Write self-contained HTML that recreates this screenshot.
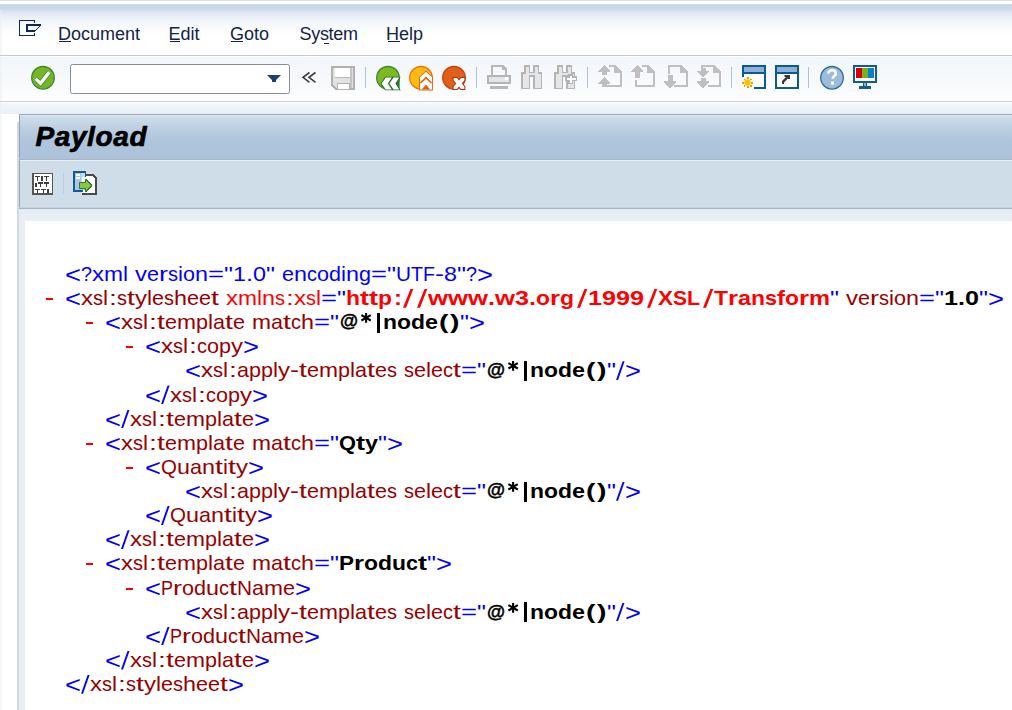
<!DOCTYPE html>
<html><head><meta charset="utf-8">
<style>
html,body{margin:0;padding:0;}
body{width:1012px;height:710px;overflow:hidden;position:relative;background:#fff;font-family:"Liberation Sans",sans-serif;}
.abs{position:absolute;}
#top{left:0;top:0;width:1012px;height:56px;
 background:linear-gradient(to bottom,#d6e1ed 0,#d6e1ed 1px,#fff 1px,#fff 4px,#c9d7e7 4px,#ccd9e8 9px,#e4ebf4 14px,#f3f6fa 22px,#fbfcfe 30px,#ffffff 36px,#ffffff 100%);}
#topline{left:0;top:55px;width:1012px;height:1px;background:#c2ccd8;}
#tb{left:0;top:56px;width:1012px;height:46px;background:linear-gradient(to bottom,#fff 0,#fff 1px,#f3f6fa 1px,#f8fafc 30px,#fdfdfe 45px);}
#tbline{left:0;top:101px;width:1012px;height:1px;background:#c9d1db;}
#below{left:0;top:102px;width:1012px;height:608px;background:linear-gradient(to bottom,#fff 0,#fff 1px,#f4f6fa 1px,#eaeff6 12px,#fff 12px);}
#leftstrip{left:0;top:10px;width:2px;height:700px;background:linear-gradient(to right,#e8ebef,#f4f6f8);opacity:.6}
#ph{left:19px;top:114px;width:993px;height:46px;border-top:1px solid #94a8bc;border-left:1px solid #8fa5bb;box-sizing:border-box;
 background:linear-gradient(to bottom,#dfe8f1 0,#dfe8f1 1px,#cfdeea 1px,#bccfe1 14px,#afc5db 26px,#acc3da 100%);}
#phb{left:19px;top:158px;width:993px;height:2px;background:linear-gradient(to bottom,#b4c4d4 0,#9fb2c5 100%);}
#pt{left:19px;top:160px;width:993px;height:49px;border-left:1px solid #93a8bd;box-sizing:border-box;
 background:linear-gradient(to bottom,#e6eef5 0,#e6eef5 1px,#cfdde8 1px,#cfdde8 100%);}
#ptb{left:19px;top:207px;width:993px;height:2px;background:linear-gradient(to bottom,#c8d5e0 0,#c8d5e0 50%,#a5b5c5 50%);}
#ptb2{left:19px;top:209px;width:993px;height:1px;background:#e2e9f1;}
#shade{left:17px;top:122px;width:2px;height:588px;background:#d2d9e4;}
#cbg{left:19px;top:209px;width:993px;height:501px;background:#e8eef6;}
#content{left:25px;top:221px;width:987px;height:489px;background:#fff;}
#hl{left:20px;top:115px;width:1px;height:93px;background:#e4ecf3;}
.menu{position:absolute;top:24px;font:18px/20px "Liberation Sans",sans-serif;color:#12234c;white-space:pre;}
.menu u{text-decoration:none;border-bottom:1px solid #12234c;}
.ul{position:absolute;height:1px;background:#12234c;top:41px;}
#title{left:35.5px;top:119.5px;font:italic 700 28px/34px "Liberation Sans",sans-serif;color:#000;letter-spacing:0.6px;-webkit-text-stroke:0.7px #000;}
.sep{position:absolute;width:1px;background:#a9c2df;}
.ln{position:absolute;left:0;width:1012px;height:24px;}
.ln b{position:absolute;top:0;font:400 21px/24px "Liberation Sans",sans-serif;white-space:pre;transform-origin:0 0;}
.ln b.nsb,.ln b.tx{font-weight:700;}
.ln b.m{color:#0000ff}.ln b.t{color:#990000}.ln b.ns,.ln b.nsb{color:#ff0000}.ln b.tx{color:#000}
.ln i.sl{position:absolute;top:2.9px;height:18.8px;}
.ln i.bar{position:absolute;top:2.7px;height:20px;width:2.6px;}
.ln i.d{position:absolute;top:12px;width:6.5px;height:2px;background:#ff0000;}
svg{position:absolute;overflow:visible;}
</style></head><body>
<div id="top" class="abs"></div>
<div id="tb" class="abs"></div>
<div id="below" class="abs"></div>
<div id="leftstrip" class="abs"></div>
<div id="topline" class="abs"></div>
<div id="tbline" class="abs"></div>
<div id="shade" class="abs"></div>
<div id="cbg" class="abs"></div>
<div id="content" class="abs"></div>
<div id="ph" class="abs"></div>
<div id="phb" class="abs"></div>
<div id="pt" class="abs"></div>
<div id="ptb" class="abs"></div><div id="ptb2" class="abs"></div>

<!-- menu -->
<svg style="left:0;top:0" width="1012" height="230" viewBox="0 0 1012 230">
<!-- menu icon -->
<g fill="#102662" shape-rendering="crispEdges">
 <rect x="19" y="20" width="16" height="1"/><rect x="19" y="20" width="1" height="16"/><rect x="19" y="35" width="16" height="1"/>
 <rect x="34" y="20" width="1" height="3"/><rect x="34" y="33" width="1" height="3"/>
 <rect x="26" y="24" width="15" height="2"/><rect x="26" y="24" width="2" height="8"/><rect x="26" y="30" width="9" height="2"/>
 <rect x="39" y="26" width="1" height="1"/><rect x="38" y="27" width="1" height="1"/><rect x="37" y="28" width="1" height="1"/><rect x="36" y="29" width="1" height="1"/><rect x="35" y="30" width="1" height="1"/><rect x="40" y="25" width="1" height="1" opacity=".6"/>
</g>
<!-- check icon -->
<circle cx="43" cy="77.8" r="11.3" fill="#76b527" stroke="#3d8a2e" stroke-width="1.3"/>
<path d="M35.8 78.8 L40.5 83.3 L49.3 72.2" fill="none" stroke="#3f8a2c" stroke-width="5" stroke-linejoin="miter" opacity=".75"/>
<path d="M35.8 78.8 L40.5 83.3 L49.3 72.2" fill="none" stroke="#fff" stroke-width="3.2" stroke-linejoin="miter"/>
<!-- input -->
<rect x="70.5" y="64.5" width="219" height="29" rx="2" fill="#fff" stroke="#8d8d8d"/>
<path d="M267 75 H281 L276 80 V82 H272 V80 Z" fill="#1e3b7c"/>
<!-- << -->
<path d="M309.5 72.5 L303 77.3 L309.5 82.3 M315.5 72.5 L309 77.3 L315.5 82.3" fill="none" stroke="#3c3c3c" stroke-width="1.6"/>
<!-- save -->
<g shape-rendering="crispEdges">
<path d="M331 66 H355 V90 H335 L331 86 Z" fill="#b0b0b0"/>
<path d="M333 68 H353 V88 H336 L333 85 Z" fill="#e2e2e2"/>
<rect x="335" y="68" width="15" height="10" fill="#fff"/><rect x="335" y="77" width="15" height="1" fill="#b8b8b8"/>
<rect x="350" y="68" width="2" height="20" fill="#c4c4c4"/>
<rect x="337" y="83" width="13" height="7" fill="#b0b0b0"/><rect x="338" y="84" width="11" height="5" fill="#fff"/>
</g>
<!-- separators -->
<g fill="#a9c3e0" shape-rendering="crispEdges">
<rect x="365" y="67" width="1" height="21"/><rect x="476" y="67" width="1" height="21"/><rect x="587" y="67" width="1" height="21"/>
<rect x="731" y="67" width="1" height="21"/><rect x="808" y="67" width="1" height="21"/>
</g>
<!-- green back -->
<circle cx="388" cy="77.8" r="11.3" fill="#7cba1e" stroke="#3a8630" stroke-width="1.3"/>
<path d="M385.3 76.9 H399.6 V90 H385.3 L380.8 83.5 Z" fill="#2c7a2c"/>
<path d="M385.8 77.6 H391.8 L387.8 83.5 L391.8 89.4 H385.8 L381.6 83.5 Z M393.6 77.6 H399.2 L395.4 83.5 L399.2 89.4 H393.6 L389.4 83.5 Z" fill="#fff" stroke="#236e2a" stroke-width="1.6" stroke-linejoin="miter" paint-order="stroke"/>
<!-- yellow up -->
<circle cx="421" cy="77.8" r="11.3" fill="#fdbb12" stroke="#e9720e" stroke-width="1.3"/>
<path d="M420 89.5 V77.3 L426 71.8 L432 77.3 V89.5 Z" fill="#fff" stroke="#e4620a" stroke-width="1.8" paint-order="stroke"/>
<path d="M420.5 83 L426 77.6 L431.5 83" fill="none" stroke="#e4620a" stroke-width="1.7"/>
<path d="M421.8 89.5 L426 84.6 L430.2 89.5 Z" fill="#e4620a"/>
<!-- red cancel -->
<circle cx="454" cy="77.8" r="11.3" fill="#e0601a" stroke="#c3410e" stroke-width="1.3"/>
<path d="M453.6 78 H457 L459 80.4 L461 78 H464.4 V80.2 L461.8 83.5 L464.4 86.8 V88.9 H461 L459 86.5 L457 88.9 H453.6 V86.8 L456.2 83.5 L453.6 80.2 Z" fill="#fff" stroke="#b52a06" stroke-width="2" stroke-linejoin="miter" paint-order="stroke"/>
<!-- printer -->
<g shape-rendering="crispEdges">
<path d="M491 65 H503 L507 69 V75 H505 V70 L503 67 H493 V75 H491 Z" fill="#b8b8b8"/>
<rect x="502" y="66" width="3" height="4" fill="#b8b8b8"/>
<rect x="487" y="75" width="24" height="9" rx="1" fill="#b4b4b4"/>
<rect x="489" y="77" width="20" height="5" fill="#e4e4e4"/>
<rect x="505" y="77" width="3" height="3" fill="#fff"/>
<rect x="490" y="86" width="18" height="3" fill="#b8b8b8"/>
</g>
<!-- binoculars -->
<g shape-rendering="crispEdges">
<path d="M524 65 H530 V71.5 H533 V65 H539 V71.5 L542 72.5 V89 H533 V76.5 H530 V89 H521 V72.5 L524 71.5 Z" fill="#b4b4b4"/>
<path d="M525.5 66.5 H528.5 V73 H534.5 V66.5 H537.5 V73.5 L540.5 74 V87.5 H534.5 V75 H528.5 V87.5 H522.5 V74 L525.5 73.5 Z" fill="#e6e6e6"/>
</g>
<g shape-rendering="crispEdges">
<path d="M557 65 H563 V71.5 H566 V65 H572 V71.5 L575 72.5 V89 H566 V76.5 H563 V89 H554 V72.5 L557 71.5 Z" fill="#b4b4b4"/>
<path d="M558.5 66.5 H561.5 V73 H567.5 V66.5 H570.5 V73.5 L573.5 74 V87.5 H567.5 V75 H561.5 V87.5 H555.5 V74 L558.5 73.5 Z" fill="#e6e6e6"/>
<path d="M568 74 H573 V76 H577 V81 H573 V84 H568 V81 H565 V76 H568 Z" fill="#b4b4b4"/>
<path d="M569.5 75.5 H571.5 V77.5 H575.5 V79.5 H571.5 V82.5 H569.5 V79.5 H566.5 V77.5 H569.5 Z" fill="#fff"/>
</g>
<!-- doc arrows -->
<g fill="#bfbfbf" shape-rendering="crispEdges">
 <!-- 1 -->
 <path d="M607 65 H615 L622 72 V87 H607 V85 H620 V72.5 H614 V67 H609 V65 Z"/>
 <path d="M614 65 L620 71 H614 Z"/>
 <path d="M604 65 L610 71 V72 H606.5 V74.5 H601.5 V72 H598 V71 Z"/>
 <path d="M604 77 L610 83 V84 H606.5 V86.5 H601.5 V84 H598 V83 Z"/>
 <!-- 2 -->
 <path d="M640 65 H648 L655 72 V87 H635 V80 H637 V85 H653 V72.5 H647 V67 H642 V65 Z"/>
 <path d="M647 65 L653 71 H647 Z"/>
 <path d="M637 65 L643 71 V72 H639.5 V77.7 H634.5 V72 H631 V71 Z"/>
 <!-- 3 -->
 <path d="M668 65 H681 L688 72 V87 H674 V85 H686 V72.5 H680 V67 H670 V73.5 H668 Z"/>
 <path d="M680 65 L686 71 H680 Z"/>
 <path d="M667.5 75 H672.5 V81 H676 V82 L670 88.8 L664 82 V81 H667.5 Z"/>
 <!-- 4 -->
 <path d="M701 65 H714 L721 72 V87 H708 V85 H719 V72.5 H713 V67 H703 V68 H701 Z"/>
 <path d="M713 65 L719 71 H713 Z"/>
 <path d="M700.5 68 H705.5 V71 H709 V72 L703 77.5 L697 72 V71 H700.5 Z"/>
 <path d="M700.5 78 H705.5 V81 H709 V82 L703 88.8 L697 82 V81 H700.5 Z"/>
</g>
<!-- window sun -->
<g shape-rendering="crispEdges">
<rect x="742" y="65" width="24" height="24" fill="#0b5a96"/>
<rect x="744" y="67" width="20" height="5" fill="#8fb1d9"/>
<rect x="744" y="74" width="20" height="13" fill="#fff"/>
<rect x="741" y="77" width="13" height="13" fill="#fafcfd"/>
</g>
<circle cx="747.5" cy="82.5" r="3.2" fill="#ffc000"/>
<g fill="#f59c00" shape-rendering="crispEdges">
<rect x="746.5" y="77" width="2" height="2"/><rect x="746.5" y="86" width="2" height="2"/><rect x="742" y="81.5" width="2" height="2"/><rect x="751" y="81.5" width="2" height="2"/>
<rect x="743.5" y="78.5" width="1.5" height="1.5"/><rect x="750" y="78.5" width="1.5" height="1.5"/><rect x="743.5" y="85" width="1.5" height="1.5"/><rect x="750" y="85" width="1.5" height="1.5"/>
</g>
<!-- window arrow -->
<g shape-rendering="crispEdges">
<rect x="775" y="65" width="24" height="24" fill="#0b5a96"/>
<rect x="777" y="67" width="20" height="5" fill="#8fb1d9"/>
<rect x="777" y="74" width="20" height="13" fill="#fff"/>
</g>
<path d="M782 84 V81 L786 77 H784.5 V75 H787 H787 V75 H790 V79 H788 V78.5 L784 82.5 V84 Z" fill="#383838"/>
<!-- help -->
<circle cx="832" cy="77.8" r="11.3" fill="#9dbbdb" stroke="#2b6ca3" stroke-width="1.3"/>
<path d="M828.3 73.6 Q828.8 70.3 832.2 70.3 Q835.8 70.3 835.8 73.4 Q835.8 75.3 833.8 76.5 Q832.7 77.2 832.7 78.8" fill="none" stroke="#fff" stroke-width="2.6"/>
<rect x="831" y="81.6" width="3" height="3" fill="#fff"/>
<!-- monitor -->
<g shape-rendering="crispEdges">
<rect x="853" y="65" width="24" height="18" rx="1" fill="#0f5c98"/>
<rect x="855" y="67" width="20" height="14" fill="#fff"/>
<rect x="856" y="68" width="6" height="10" fill="#d40000"/>
<rect x="862" y="68" width="6" height="10" fill="#7ab020"/>
<rect x="868" y="68" width="6" height="10" fill="#0a80c8"/>
<rect x="863" y="83" width="4" height="4" fill="#0f5c98"/><rect x="864" y="83" width="2" height="3" fill="#8fb1d9"/>
<rect x="859" y="86" width="12" height="3" fill="#0f5c98"/>
</g>
<!-- panel toolbar icons -->
<g shape-rendering="crispEdges">
<rect x="32" y="173" width="21" height="22" fill="#545454"/>
<rect x="34" y="174.4" width="18" height="18.6" fill="#fff"/>
<g fill="#3e3e3e">
<rect x="35.2" y="176" width="4.6" height="1.2"/><rect x="37" y="176" width="1.2" height="4.8"/>
<rect x="41.2" y="176" width="1.5" height="4.8"/>
<rect x="44.2" y="176" width="4.7" height="1.2"/><rect x="45.9" y="176" width="1.2" height="4.8"/>
<rect x="35" y="182.5" width="1.5" height="4.2"/>
<rect x="38.2" y="182.3" width="4.4" height="1.3"/><rect x="39.9" y="182.3" width="1.2" height="4.5"/>
<rect x="44.2" y="182.3" width="4.7" height="1.3"/><rect x="45.9" y="182.3" width="1.2" height="4.5"/>
<rect x="35.2" y="189" width="4.6" height="1.2"/><rect x="37" y="189" width="1.2" height="4"/>
<rect x="41" y="189" width="4.5" height="1.2"/><rect x="42.7" y="189" width="1.2" height="4"/>
<rect x="47.3" y="189.3" width="1.4" height="3.7"/>
</g>
<rect x="63" y="173" width="1" height="21" fill="#b7cfe6"/>
<path d="M82 174 H93.5 L97 177.5 V194.6 H82 Z" fill="#4a4a4a"/>
<path d="M82 176 H92.5 L95 178.5 V192.5 H82 Z" fill="#fff"/>
<rect x="73" y="171" width="13" height="2" fill="#0d5a96"/>
<rect x="73" y="171" width="2" height="20.7" fill="#0d5a96"/>
<rect x="85" y="171" width="1" height="6" fill="#0d5a96"/>
<rect x="73" y="189.5" width="10" height="2.2" fill="#0d5a96"/>
<rect x="75" y="173" width="10" height="16.5" fill="#a9c6e6"/>
<rect x="81" y="173" width="4" height="9" fill="#c3d9ef"/>
<rect x="82" y="177" width="3" height="5" fill="#fff"/>
<rect x="76" y="174" width="4" height="2" fill="#fff"/><rect x="76" y="177" width="4" height="2" fill="#fff"/>
<path d="M79 182 H85 V179 H87 V180 H88 V181 H89 V182 H90 V183 H91 V184 H92 V187 H91 V188 H90 V189 H89 V190 H88 V191 H87 V191.7 H85 V188.7 H79 Z" fill="#2e7a2e"/>
<path d="M80 183.2 H86 V180.5 L90.8 185.5 L86 190.5 V187.6 H80 Z" fill="#8cc63c"/>
</g>
</svg>

<div class="menu" style="left:58px">Document</div><div class="ul" style="left:59px;width:12px"></div>
<div class="menu" style="left:168.5px">Edit</div><div class="ul" style="left:170px;width:10px"></div>
<div class="menu" style="left:230px">Goto</div><div class="ul" style="left:231px;width:12px"></div>
<div class="menu" style="left:299.5px;letter-spacing:-0.3px">System</div><div class="ul" style="left:324px;width:5px;top:43px"></div>
<div class="menu" style="left:386px">Help</div><div class="ul" style="left:388px;width:12px"></div>

<div id="title" class="abs">Payload</div>

<div class="ln" style="top:262.00px"><b class="m" style="left:65.00px;transform-origin:0 7px;transform:scale(1.304,1.18)">&lt;</b><b class="m" style="left:81.00px;transform:scaleX(0.941)">?</b><b class="m" style="left:92.00px;transform:scaleX(1.143)">x</b><b class="m" style="left:104.00px;transform:scaleX(1.086)">m</b><b class="m" style="left:123.00px;transform:scaleX(1.070)">l</b><b class="m" style="left:135.00px;transform:scaleX(1.143)">v</b><b class="m" style="left:147.00px;transform:scaleX(1.027)">e</b><b class="m" style="left:159.00px;transform:scaleX(1.286)">r</b><b class="m" style="left:168.00px;transform:scaleX(0.952)">s</b><b class="m" style="left:178.00px;transform:scaleX(1.070)">i</b><b class="m" style="left:183.00px;transform:scaleX(1.027)">o</b><b class="m" style="left:195.00px;transform:scaleX(1.112)">n</b><b class="m" style="left:208.00px;transform:scaleX(1.304)">=</b><b class="m" style="left:224.00px;transform:scaleX(1.205)">&quot;</b><b class="m" style="left:233.00px;transform:scaleX(1.112)">1</b><b class="m" style="left:246.00px;transform:scaleX(1.198)">.</b><b class="m" style="left:253.00px;transform:scaleX(1.112)">0</b><b class="m" style="left:266.00px;transform:scaleX(1.205)">&quot;</b><b class="m" style="left:282.00px;transform:scaleX(1.027)">e</b><b class="m" style="left:294.00px;transform:scaleX(1.112)">n</b><b class="m" style="left:307.00px;transform:scaleX(0.952)">c</b><b class="m" style="left:317.00px;transform:scaleX(1.027)">o</b><b class="m" style="left:329.00px;transform:scaleX(1.027)">d</b><b class="m" style="left:341.00px;transform:scaleX(1.070)">i</b><b class="m" style="left:346.00px;transform:scaleX(1.112)">n</b><b class="m" style="left:359.00px;transform:scaleX(1.027)">g</b><b class="m" style="left:371.00px;transform:scaleX(1.304)">=</b><b class="m" style="left:387.00px;transform:scaleX(1.205)">&quot;</b><b class="m" style="left:396.00px;transform:scaleX(0.989)">U</b><b class="m" style="left:411.00px;transform:scaleX(0.935)">T</b><b class="m" style="left:423.00px;transform:scaleX(0.935)">F</b><b class="m" style="left:435.00px;transform:scaleX(1.286)">-</b><b class="m" style="left:444.00px;transform:scaleX(1.112)">8</b><b class="m" style="left:457.00px;transform:scaleX(1.205)">&quot;</b><b class="m" style="left:466.00px;transform:scaleX(0.941)">?</b><b class="m" style="left:477.00px;transform-origin:0 7px;transform:scale(1.304,1.18)">&gt;</b></div>
<div class="ln" style="top:286.12px"><i class="d" style="left:46px"></i><b class="m" style="left:65.00px;transform-origin:0 7px;transform:scale(1.304,1.18)">&lt;</b><b class="t" style="left:81.00px;transform:scaleX(1.143)">x</b><b class="t" style="left:93.00px;transform:scaleX(0.952)">s</b><b class="t" style="left:103.00px;transform:scaleX(1.070)">l</b><b class="t" style="left:108.56px;transform:scaleX(1.350)">:</b><b class="t" style="left:117.00px;transform:scaleX(0.952)">s</b><b class="t" style="left:127.06px;transform:scaleX(1.350)">t</b><b class="t" style="left:135.00px;transform:scaleX(1.143)">y</b><b class="t" style="left:147.00px;transform:scaleX(1.070)">l</b><b class="t" style="left:152.00px;transform:scaleX(1.027)">e</b><b class="t" style="left:164.00px;transform:scaleX(0.952)">s</b><b class="t" style="left:174.00px;transform:scaleX(1.112)">h</b><b class="t" style="left:187.00px;transform:scaleX(1.027)">e</b><b class="t" style="left:199.00px;transform:scaleX(1.027)">e</b><b class="t" style="left:211.06px;transform:scaleX(1.350)">t</b><b class="ns" style="left:226.00px;transform:scaleX(1.143)">x</b><b class="ns" style="left:238.00px;transform:scaleX(1.086)">m</b><b class="ns" style="left:257.00px;transform:scaleX(1.070)">l</b><b class="ns" style="left:262.00px;transform:scaleX(1.112)">n</b><b class="ns" style="left:275.00px;transform:scaleX(0.952)">s</b><b class="ns" style="left:285.56px;transform:scaleX(1.350)">:</b><b class="ns" style="left:294.00px;transform:scaleX(1.143)">x</b><b class="ns" style="left:306.00px;transform:scaleX(0.952)">s</b><b class="ns" style="left:316.00px;transform:scaleX(1.070)">l</b><b class="m" style="left:321.00px;transform:scaleX(1.304)">=</b><b class="m" style="left:337.00px;transform:scaleX(1.205)">&quot;</b><b class="nsb" style="left:346.00px;transform:scaleX(1.091)">h</b><b class="nsb" style="left:360.00px;transform:scaleX(1.286)">t</b><b class="nsb" style="left:369.00px;transform:scaleX(1.286)">t</b><b class="nsb" style="left:378.00px;transform:scaleX(1.091)">p</b><b class="nsb" style="left:393.80px;transform:scaleX(1.143)">:</b><i class="sl" style="left:400px;width:14px;background:#ff0000;clip-path:polygon(10.5px 0,13.3px 0,6px 100%,3px 100%)"></i><i class="sl" style="left:414px;width:14px;background:#ff0000;clip-path:polygon(10.5px 0,13.3px 0,6px 100%,3px 100%)"></i><b class="nsb" style="left:428.00px;transform:scaleX(1.224)">w</b><b class="nsb" style="left:448.00px;transform:scaleX(1.224)">w</b><b class="nsb" style="left:468.00px;transform:scaleX(1.224)">w</b><b class="nsb" style="left:488.00px;transform:scaleX(1.198)">.</b><b class="nsb" style="left:495.00px;transform:scaleX(1.224)">w</b><b class="nsb" style="left:515.00px;transform:scaleX(1.198)">3</b><b class="nsb" style="left:529.00px;transform:scaleX(1.198)">.</b><b class="nsb" style="left:536.00px;transform:scaleX(1.091)">o</b><b class="nsb" style="left:550.00px;transform:scaleX(1.221)">r</b><b class="nsb" style="left:560.00px;transform:scaleX(1.091)">g</b><i class="sl" style="left:574px;width:14px;background:#ff0000;clip-path:polygon(10.5px 0,13.3px 0,6px 100%,3px 100%)"></i><b class="nsb" style="left:588.00px;transform:scaleX(1.198)">1</b><b class="nsb" style="left:602.00px;transform:scaleX(1.198)">9</b><b class="nsb" style="left:616.00px;transform:scaleX(1.198)">9</b><b class="nsb" style="left:630.00px;transform:scaleX(1.198)">9</b><i class="sl" style="left:644px;width:14px;background:#ff0000;clip-path:polygon(10.5px 0,13.3px 0,6px 100%,3px 100%)"></i><b class="nsb" style="left:658.00px;transform:scaleX(1.070)">X</b><b class="nsb" style="left:673.00px">S</b><b class="nsb" style="left:687.00px;transform:scaleX(1.013)">L</b><i class="sl" style="left:700px;width:14px;background:#ff0000;clip-path:polygon(10.5px 0,13.3px 0,6px 100%,3px 100%)"></i><b class="nsb" style="left:714.00px;transform:scaleX(1.091)">T</b><b class="nsb" style="left:728.00px;transform:scaleX(1.221)">r</b><b class="nsb" style="left:738.00px;transform:scaleX(1.112)">a</b><b class="nsb" style="left:751.00px;transform:scaleX(1.091)">n</b><b class="nsb" style="left:765.00px;transform:scaleX(1.027)">s</b><b class="nsb" style="left:777.00px;transform:scaleX(1.143)">f</b><b class="nsb" style="left:785.00px;transform:scaleX(1.091)">o</b><b class="nsb" style="left:799.00px;transform:scaleX(1.221)">r</b><b class="nsb" style="left:809.00px;transform:scaleX(1.124)">m</b><b class="m" style="left:830.00px;transform:scaleX(1.205)">&quot;</b><b class="t" style="left:846.00px;transform:scaleX(1.143)">v</b><b class="t" style="left:858.00px;transform:scaleX(1.027)">e</b><b class="t" style="left:870.00px;transform:scaleX(1.286)">r</b><b class="t" style="left:879.00px;transform:scaleX(0.952)">s</b><b class="t" style="left:889.00px;transform:scaleX(1.070)">i</b><b class="t" style="left:894.00px;transform:scaleX(1.027)">o</b><b class="t" style="left:906.00px;transform:scaleX(1.112)">n</b><b class="m" style="left:919.00px;transform:scaleX(1.304)">=</b><b class="m" style="left:935.00px;transform:scaleX(1.205)">&quot;</b><b class="tx" style="left:944.00px;transform:scaleX(1.198)">1</b><b class="tx" style="left:958.00px;transform:scaleX(1.198)">.</b><b class="tx" style="left:965.00px;transform:scaleX(1.198)">0</b><b class="m" style="left:979.00px;transform:scaleX(1.205)">&quot;</b><b class="m" style="left:988.00px;transform-origin:0 7px;transform:scale(1.304,1.18)">&gt;</b></div>
<div class="ln" style="top:310.24px"><i class="d" style="left:86px"></i><b class="m" style="left:105.00px;transform-origin:0 7px;transform:scale(1.304,1.18)">&lt;</b><b class="t" style="left:121.00px;transform:scaleX(1.143)">x</b><b class="t" style="left:133.00px;transform:scaleX(0.952)">s</b><b class="t" style="left:143.00px;transform:scaleX(1.070)">l</b><b class="t" style="left:148.56px;transform:scaleX(1.350)">:</b><b class="t" style="left:157.06px;transform:scaleX(1.350)">t</b><b class="t" style="left:165.00px;transform:scaleX(1.027)">e</b><b class="t" style="left:177.00px;transform:scaleX(1.086)">m</b><b class="t" style="left:196.00px;transform:scaleX(1.027)">p</b><b class="t" style="left:208.00px;transform:scaleX(1.070)">l</b><b class="t" style="left:213.00px;transform:scaleX(1.027)">a</b><b class="t" style="left:225.06px;transform:scaleX(1.350)">t</b><b class="t" style="left:233.00px;transform:scaleX(1.027)">e</b><b class="t" style="left:252.00px;transform:scaleX(1.086)">m</b><b class="t" style="left:271.00px;transform:scaleX(1.027)">a</b><b class="t" style="left:283.06px;transform:scaleX(1.350)">t</b><b class="t" style="left:291.00px;transform:scaleX(0.952)">c</b><b class="t" style="left:301.00px;transform:scaleX(1.112)">h</b><b class="m" style="left:314.00px;transform:scaleX(1.304)">=</b><b class="m" style="left:330.00px;transform:scaleX(1.205)">&quot;</b><b class="tx" style="left:340.4px;top:-0.8px;-webkit-text-stroke:0.5px #000;transform-origin:0 14px;transform:scale(0.88,0.9)">@</b><svg class="ast" style="left:358px;top:0" width="14" height="24"><path d="M8.1 2.9V12.8M3.4 5.1L12.8 10.5M12.8 5.1L3.4 10.5" stroke="#000" stroke-width="2.1" fill="none"/></svg><i class="bar" style="left:377.2px;background:#000"></i><b class="tx" style="left:383.00px;transform:scaleX(1.091)">n</b><b class="tx" style="left:397.00px;transform:scaleX(1.091)">o</b><b class="tx" style="left:411.00px;transform:scaleX(1.091)">d</b><b class="tx" style="left:425.00px;transform:scaleX(1.112)">e</b><b class="tx" style="left:438.77px;transform:scaleX(1.350)">(</b><b class="tx" style="left:449.77px;transform:scaleX(1.350)">)</b><b class="m" style="left:460.00px;transform:scaleX(1.205)">&quot;</b><b class="m" style="left:469.00px;transform-origin:0 7px;transform:scale(1.304,1.18)">&gt;</b></div>
<div class="ln" style="top:334.36px"><i class="d" style="left:126px"></i><b class="m" style="left:145.00px;transform-origin:0 7px;transform:scale(1.304,1.18)">&lt;</b><b class="t" style="left:161.00px;transform:scaleX(1.143)">x</b><b class="t" style="left:173.00px;transform:scaleX(0.952)">s</b><b class="t" style="left:183.00px;transform:scaleX(1.070)">l</b><b class="t" style="left:188.56px;transform:scaleX(1.350)">:</b><b class="t" style="left:197.00px;transform:scaleX(0.952)">c</b><b class="t" style="left:207.00px;transform:scaleX(1.027)">o</b><b class="t" style="left:219.00px;transform:scaleX(1.027)">p</b><b class="t" style="left:231.00px;transform:scaleX(1.143)">y</b><b class="m" style="left:243.00px;transform-origin:0 7px;transform:scale(1.304,1.18)">&gt;</b></div>
<div class="ln" style="top:358.48px"><b class="m" style="left:185.00px;transform-origin:0 7px;transform:scale(1.304,1.18)">&lt;</b><b class="t" style="left:201.00px;transform:scaleX(1.143)">x</b><b class="t" style="left:213.00px;transform:scaleX(0.952)">s</b><b class="t" style="left:223.00px;transform:scaleX(1.070)">l</b><b class="t" style="left:228.56px;transform:scaleX(1.350)">:</b><b class="t" style="left:237.00px;transform:scaleX(1.027)">a</b><b class="t" style="left:249.00px;transform:scaleX(1.027)">p</b><b class="t" style="left:261.00px;transform:scaleX(1.027)">p</b><b class="t" style="left:273.00px;transform:scaleX(1.070)">l</b><b class="t" style="left:278.00px;transform:scaleX(1.143)">y</b><b class="t" style="left:290.00px;transform:scaleX(1.286)">-</b><b class="t" style="left:299.06px;transform:scaleX(1.350)">t</b><b class="t" style="left:307.00px;transform:scaleX(1.027)">e</b><b class="t" style="left:319.00px;transform:scaleX(1.086)">m</b><b class="t" style="left:338.00px;transform:scaleX(1.027)">p</b><b class="t" style="left:350.00px;transform:scaleX(1.070)">l</b><b class="t" style="left:355.00px;transform:scaleX(1.027)">a</b><b class="t" style="left:367.06px;transform:scaleX(1.350)">t</b><b class="t" style="left:375.00px;transform:scaleX(1.027)">e</b><b class="t" style="left:387.00px;transform:scaleX(0.952)">s</b><b class="t" style="left:404.00px;transform:scaleX(0.952)">s</b><b class="t" style="left:414.00px;transform:scaleX(1.027)">e</b><b class="t" style="left:426.00px;transform:scaleX(1.070)">l</b><b class="t" style="left:431.00px;transform:scaleX(1.027)">e</b><b class="t" style="left:443.00px;transform:scaleX(0.952)">c</b><b class="t" style="left:453.06px;transform:scaleX(1.350)">t</b><b class="m" style="left:461.00px;transform:scaleX(1.304)">=</b><b class="m" style="left:477.00px;transform:scaleX(1.205)">&quot;</b><b class="tx" style="left:487.4px;top:-0.8px;-webkit-text-stroke:0.5px #000;transform-origin:0 14px;transform:scale(0.88,0.9)">@</b><svg class="ast" style="left:505px;top:0" width="14" height="24"><path d="M8.1 2.9V12.8M3.4 5.1L12.8 10.5M12.8 5.1L3.4 10.5" stroke="#000" stroke-width="2.1" fill="none"/></svg><i class="bar" style="left:524.2px;background:#000"></i><b class="tx" style="left:530.00px;transform:scaleX(1.091)">n</b><b class="tx" style="left:544.00px;transform:scaleX(1.091)">o</b><b class="tx" style="left:558.00px;transform:scaleX(1.091)">d</b><b class="tx" style="left:572.00px;transform:scaleX(1.112)">e</b><b class="tx" style="left:585.77px;transform:scaleX(1.350)">(</b><b class="tx" style="left:596.77px;transform:scaleX(1.350)">)</b><b class="m" style="left:607.00px;transform:scaleX(1.205)">&quot;</b><i class="sl" style="left:616px;width:9px;background:#0000ff;clip-path:polygon(6.6px 0,8.6px 0,2px 100%,0px 100%)"></i><b class="m" style="left:625.00px;transform-origin:0 7px;transform:scale(1.304,1.18)">&gt;</b></div>
<div class="ln" style="top:382.60px"><b class="m" style="left:145.00px;transform-origin:0 7px;transform:scale(1.304,1.18)">&lt;</b><i class="sl" style="left:161px;width:9px;background:#0000ff;clip-path:polygon(6.6px 0,8.6px 0,2px 100%,0px 100%)"></i><b class="t" style="left:170.00px;transform:scaleX(1.143)">x</b><b class="t" style="left:182.00px;transform:scaleX(0.952)">s</b><b class="t" style="left:192.00px;transform:scaleX(1.070)">l</b><b class="t" style="left:197.56px;transform:scaleX(1.350)">:</b><b class="t" style="left:206.00px;transform:scaleX(0.952)">c</b><b class="t" style="left:216.00px;transform:scaleX(1.027)">o</b><b class="t" style="left:228.00px;transform:scaleX(1.027)">p</b><b class="t" style="left:240.00px;transform:scaleX(1.143)">y</b><b class="m" style="left:252.00px;transform-origin:0 7px;transform:scale(1.304,1.18)">&gt;</b></div>
<div class="ln" style="top:406.72px"><b class="m" style="left:105.00px;transform-origin:0 7px;transform:scale(1.304,1.18)">&lt;</b><i class="sl" style="left:121px;width:9px;background:#0000ff;clip-path:polygon(6.6px 0,8.6px 0,2px 100%,0px 100%)"></i><b class="t" style="left:130.00px;transform:scaleX(1.143)">x</b><b class="t" style="left:142.00px;transform:scaleX(0.952)">s</b><b class="t" style="left:152.00px;transform:scaleX(1.070)">l</b><b class="t" style="left:157.56px;transform:scaleX(1.350)">:</b><b class="t" style="left:166.06px;transform:scaleX(1.350)">t</b><b class="t" style="left:174.00px;transform:scaleX(1.027)">e</b><b class="t" style="left:186.00px;transform:scaleX(1.086)">m</b><b class="t" style="left:205.00px;transform:scaleX(1.027)">p</b><b class="t" style="left:217.00px;transform:scaleX(1.070)">l</b><b class="t" style="left:222.00px;transform:scaleX(1.027)">a</b><b class="t" style="left:234.06px;transform:scaleX(1.350)">t</b><b class="t" style="left:242.00px;transform:scaleX(1.027)">e</b><b class="m" style="left:254.00px;transform-origin:0 7px;transform:scale(1.304,1.18)">&gt;</b></div>
<div class="ln" style="top:430.84px"><i class="d" style="left:86px"></i><b class="m" style="left:105.00px;transform-origin:0 7px;transform:scale(1.304,1.18)">&lt;</b><b class="t" style="left:121.00px;transform:scaleX(1.143)">x</b><b class="t" style="left:133.00px;transform:scaleX(0.952)">s</b><b class="t" style="left:143.00px;transform:scaleX(1.070)">l</b><b class="t" style="left:148.56px;transform:scaleX(1.350)">:</b><b class="t" style="left:157.06px;transform:scaleX(1.350)">t</b><b class="t" style="left:165.00px;transform:scaleX(1.027)">e</b><b class="t" style="left:177.00px;transform:scaleX(1.086)">m</b><b class="t" style="left:196.00px;transform:scaleX(1.027)">p</b><b class="t" style="left:208.00px;transform:scaleX(1.070)">l</b><b class="t" style="left:213.00px;transform:scaleX(1.027)">a</b><b class="t" style="left:225.06px;transform:scaleX(1.350)">t</b><b class="t" style="left:233.00px;transform:scaleX(1.027)">e</b><b class="t" style="left:252.00px;transform:scaleX(1.086)">m</b><b class="t" style="left:271.00px;transform:scaleX(1.027)">a</b><b class="t" style="left:283.06px;transform:scaleX(1.350)">t</b><b class="t" style="left:291.00px;transform:scaleX(0.952)">c</b><b class="t" style="left:301.00px;transform:scaleX(1.112)">h</b><b class="m" style="left:314.00px;transform:scaleX(1.304)">=</b><b class="m" style="left:330.00px;transform:scaleX(1.205)">&quot;</b><b class="tx" style="left:339.00px;transform:scaleX(1.040)">Q</b><b class="tx" style="left:356.00px;transform:scaleX(1.286)">t</b><b class="tx" style="left:365.00px;transform:scaleX(1.112)">y</b><b class="m" style="left:378.00px;transform:scaleX(1.205)">&quot;</b><b class="m" style="left:387.00px;transform-origin:0 7px;transform:scale(1.304,1.18)">&gt;</b></div>
<div class="ln" style="top:454.96px"><i class="d" style="left:126px"></i><b class="m" style="left:145.00px;transform-origin:0 7px;transform:scale(1.304,1.18)">&lt;</b><b class="t" style="left:161.00px;transform:scaleX(0.979)">Q</b><b class="t" style="left:177.00px;transform:scaleX(1.112)">u</b><b class="t" style="left:190.00px;transform:scaleX(1.027)">a</b><b class="t" style="left:202.00px;transform:scaleX(1.112)">n</b><b class="t" style="left:215.06px;transform:scaleX(1.350)">t</b><b class="t" style="left:223.00px;transform:scaleX(1.070)">i</b><b class="t" style="left:228.06px;transform:scaleX(1.350)">t</b><b class="t" style="left:236.00px;transform:scaleX(1.143)">y</b><b class="m" style="left:248.00px;transform-origin:0 7px;transform:scale(1.304,1.18)">&gt;</b></div>
<div class="ln" style="top:479.08px"><b class="m" style="left:185.00px;transform-origin:0 7px;transform:scale(1.304,1.18)">&lt;</b><b class="t" style="left:201.00px;transform:scaleX(1.143)">x</b><b class="t" style="left:213.00px;transform:scaleX(0.952)">s</b><b class="t" style="left:223.00px;transform:scaleX(1.070)">l</b><b class="t" style="left:228.56px;transform:scaleX(1.350)">:</b><b class="t" style="left:237.00px;transform:scaleX(1.027)">a</b><b class="t" style="left:249.00px;transform:scaleX(1.027)">p</b><b class="t" style="left:261.00px;transform:scaleX(1.027)">p</b><b class="t" style="left:273.00px;transform:scaleX(1.070)">l</b><b class="t" style="left:278.00px;transform:scaleX(1.143)">y</b><b class="t" style="left:290.00px;transform:scaleX(1.286)">-</b><b class="t" style="left:299.06px;transform:scaleX(1.350)">t</b><b class="t" style="left:307.00px;transform:scaleX(1.027)">e</b><b class="t" style="left:319.00px;transform:scaleX(1.086)">m</b><b class="t" style="left:338.00px;transform:scaleX(1.027)">p</b><b class="t" style="left:350.00px;transform:scaleX(1.070)">l</b><b class="t" style="left:355.00px;transform:scaleX(1.027)">a</b><b class="t" style="left:367.06px;transform:scaleX(1.350)">t</b><b class="t" style="left:375.00px;transform:scaleX(1.027)">e</b><b class="t" style="left:387.00px;transform:scaleX(0.952)">s</b><b class="t" style="left:404.00px;transform:scaleX(0.952)">s</b><b class="t" style="left:414.00px;transform:scaleX(1.027)">e</b><b class="t" style="left:426.00px;transform:scaleX(1.070)">l</b><b class="t" style="left:431.00px;transform:scaleX(1.027)">e</b><b class="t" style="left:443.00px;transform:scaleX(0.952)">c</b><b class="t" style="left:453.06px;transform:scaleX(1.350)">t</b><b class="m" style="left:461.00px;transform:scaleX(1.304)">=</b><b class="m" style="left:477.00px;transform:scaleX(1.205)">&quot;</b><b class="tx" style="left:487.4px;top:-0.8px;-webkit-text-stroke:0.5px #000;transform-origin:0 14px;transform:scale(0.88,0.9)">@</b><svg class="ast" style="left:505px;top:0" width="14" height="24"><path d="M8.1 2.9V12.8M3.4 5.1L12.8 10.5M12.8 5.1L3.4 10.5" stroke="#000" stroke-width="2.1" fill="none"/></svg><i class="bar" style="left:524.2px;background:#000"></i><b class="tx" style="left:530.00px;transform:scaleX(1.091)">n</b><b class="tx" style="left:544.00px;transform:scaleX(1.091)">o</b><b class="tx" style="left:558.00px;transform:scaleX(1.091)">d</b><b class="tx" style="left:572.00px;transform:scaleX(1.112)">e</b><b class="tx" style="left:585.77px;transform:scaleX(1.350)">(</b><b class="tx" style="left:596.77px;transform:scaleX(1.350)">)</b><b class="m" style="left:607.00px;transform:scaleX(1.205)">&quot;</b><i class="sl" style="left:616px;width:9px;background:#0000ff;clip-path:polygon(6.6px 0,8.6px 0,2px 100%,0px 100%)"></i><b class="m" style="left:625.00px;transform-origin:0 7px;transform:scale(1.304,1.18)">&gt;</b></div>
<div class="ln" style="top:503.20px"><b class="m" style="left:145.00px;transform-origin:0 7px;transform:scale(1.304,1.18)">&lt;</b><i class="sl" style="left:161px;width:9px;background:#0000ff;clip-path:polygon(6.6px 0,8.6px 0,2px 100%,0px 100%)"></i><b class="t" style="left:170.00px;transform:scaleX(0.979)">Q</b><b class="t" style="left:186.00px;transform:scaleX(1.112)">u</b><b class="t" style="left:199.00px;transform:scaleX(1.027)">a</b><b class="t" style="left:211.00px;transform:scaleX(1.112)">n</b><b class="t" style="left:224.06px;transform:scaleX(1.350)">t</b><b class="t" style="left:232.00px;transform:scaleX(1.070)">i</b><b class="t" style="left:237.06px;transform:scaleX(1.350)">t</b><b class="t" style="left:245.00px;transform:scaleX(1.143)">y</b><b class="m" style="left:257.00px;transform-origin:0 7px;transform:scale(1.304,1.18)">&gt;</b></div>
<div class="ln" style="top:527.32px"><b class="m" style="left:105.00px;transform-origin:0 7px;transform:scale(1.304,1.18)">&lt;</b><i class="sl" style="left:121px;width:9px;background:#0000ff;clip-path:polygon(6.6px 0,8.6px 0,2px 100%,0px 100%)"></i><b class="t" style="left:130.00px;transform:scaleX(1.143)">x</b><b class="t" style="left:142.00px;transform:scaleX(0.952)">s</b><b class="t" style="left:152.00px;transform:scaleX(1.070)">l</b><b class="t" style="left:157.56px;transform:scaleX(1.350)">:</b><b class="t" style="left:166.06px;transform:scaleX(1.350)">t</b><b class="t" style="left:174.00px;transform:scaleX(1.027)">e</b><b class="t" style="left:186.00px;transform:scaleX(1.086)">m</b><b class="t" style="left:205.00px;transform:scaleX(1.027)">p</b><b class="t" style="left:217.00px;transform:scaleX(1.070)">l</b><b class="t" style="left:222.00px;transform:scaleX(1.027)">a</b><b class="t" style="left:234.06px;transform:scaleX(1.350)">t</b><b class="t" style="left:242.00px;transform:scaleX(1.027)">e</b><b class="m" style="left:254.00px;transform-origin:0 7px;transform:scale(1.304,1.18)">&gt;</b></div>
<div class="ln" style="top:551.44px"><i class="d" style="left:86px"></i><b class="m" style="left:105.00px;transform-origin:0 7px;transform:scale(1.304,1.18)">&lt;</b><b class="t" style="left:121.00px;transform:scaleX(1.143)">x</b><b class="t" style="left:133.00px;transform:scaleX(0.952)">s</b><b class="t" style="left:143.00px;transform:scaleX(1.070)">l</b><b class="t" style="left:148.56px;transform:scaleX(1.350)">:</b><b class="t" style="left:157.06px;transform:scaleX(1.350)">t</b><b class="t" style="left:165.00px;transform:scaleX(1.027)">e</b><b class="t" style="left:177.00px;transform:scaleX(1.086)">m</b><b class="t" style="left:196.00px;transform:scaleX(1.027)">p</b><b class="t" style="left:208.00px;transform:scaleX(1.070)">l</b><b class="t" style="left:213.00px;transform:scaleX(1.027)">a</b><b class="t" style="left:225.06px;transform:scaleX(1.350)">t</b><b class="t" style="left:233.00px;transform:scaleX(1.027)">e</b><b class="t" style="left:252.00px;transform:scaleX(1.086)">m</b><b class="t" style="left:271.00px;transform:scaleX(1.027)">a</b><b class="t" style="left:283.06px;transform:scaleX(1.350)">t</b><b class="t" style="left:291.00px;transform:scaleX(0.952)">c</b><b class="t" style="left:301.00px;transform:scaleX(1.112)">h</b><b class="m" style="left:314.00px;transform:scaleX(1.304)">=</b><b class="m" style="left:330.00px;transform:scaleX(1.205)">&quot;</b><b class="tx" style="left:339.00px;transform:scaleX(1.070)">P</b><b class="tx" style="left:354.00px;transform:scaleX(1.221)">r</b><b class="tx" style="left:364.00px;transform:scaleX(1.091)">o</b><b class="tx" style="left:378.00px;transform:scaleX(1.091)">d</b><b class="tx" style="left:392.00px;transform:scaleX(1.091)">u</b><b class="tx" style="left:406.00px;transform:scaleX(1.027)">c</b><b class="tx" style="left:418.00px;transform:scaleX(1.286)">t</b><b class="m" style="left:427.00px;transform:scaleX(1.205)">&quot;</b><b class="m" style="left:436.00px;transform-origin:0 7px;transform:scale(1.304,1.18)">&gt;</b></div>
<div class="ln" style="top:575.56px"><i class="d" style="left:126px"></i><b class="m" style="left:145.00px;transform-origin:0 7px;transform:scale(1.304,1.18)">&lt;</b><b class="t" style="left:161.00px;transform:scaleX(0.856)">P</b><b class="t" style="left:173.00px;transform:scaleX(1.286)">r</b><b class="t" style="left:182.00px;transform:scaleX(1.027)">o</b><b class="t" style="left:194.00px;transform:scaleX(1.027)">d</b><b class="t" style="left:206.00px;transform:scaleX(1.112)">u</b><b class="t" style="left:219.00px;transform:scaleX(0.952)">c</b><b class="t" style="left:229.06px;transform:scaleX(1.350)">t</b><b class="t" style="left:237.00px;transform:scaleX(0.989)">N</b><b class="t" style="left:252.00px;transform:scaleX(1.027)">a</b><b class="t" style="left:264.00px;transform:scaleX(1.086)">m</b><b class="t" style="left:283.00px;transform:scaleX(1.027)">e</b><b class="m" style="left:295.00px;transform-origin:0 7px;transform:scale(1.304,1.18)">&gt;</b></div>
<div class="ln" style="top:599.68px"><b class="m" style="left:185.00px;transform-origin:0 7px;transform:scale(1.304,1.18)">&lt;</b><b class="t" style="left:201.00px;transform:scaleX(1.143)">x</b><b class="t" style="left:213.00px;transform:scaleX(0.952)">s</b><b class="t" style="left:223.00px;transform:scaleX(1.070)">l</b><b class="t" style="left:228.56px;transform:scaleX(1.350)">:</b><b class="t" style="left:237.00px;transform:scaleX(1.027)">a</b><b class="t" style="left:249.00px;transform:scaleX(1.027)">p</b><b class="t" style="left:261.00px;transform:scaleX(1.027)">p</b><b class="t" style="left:273.00px;transform:scaleX(1.070)">l</b><b class="t" style="left:278.00px;transform:scaleX(1.143)">y</b><b class="t" style="left:290.00px;transform:scaleX(1.286)">-</b><b class="t" style="left:299.06px;transform:scaleX(1.350)">t</b><b class="t" style="left:307.00px;transform:scaleX(1.027)">e</b><b class="t" style="left:319.00px;transform:scaleX(1.086)">m</b><b class="t" style="left:338.00px;transform:scaleX(1.027)">p</b><b class="t" style="left:350.00px;transform:scaleX(1.070)">l</b><b class="t" style="left:355.00px;transform:scaleX(1.027)">a</b><b class="t" style="left:367.06px;transform:scaleX(1.350)">t</b><b class="t" style="left:375.00px;transform:scaleX(1.027)">e</b><b class="t" style="left:387.00px;transform:scaleX(0.952)">s</b><b class="t" style="left:404.00px;transform:scaleX(0.952)">s</b><b class="t" style="left:414.00px;transform:scaleX(1.027)">e</b><b class="t" style="left:426.00px;transform:scaleX(1.070)">l</b><b class="t" style="left:431.00px;transform:scaleX(1.027)">e</b><b class="t" style="left:443.00px;transform:scaleX(0.952)">c</b><b class="t" style="left:453.06px;transform:scaleX(1.350)">t</b><b class="m" style="left:461.00px;transform:scaleX(1.304)">=</b><b class="m" style="left:477.00px;transform:scaleX(1.205)">&quot;</b><b class="tx" style="left:487.4px;top:-0.8px;-webkit-text-stroke:0.5px #000;transform-origin:0 14px;transform:scale(0.88,0.9)">@</b><svg class="ast" style="left:505px;top:0" width="14" height="24"><path d="M8.1 2.9V12.8M3.4 5.1L12.8 10.5M12.8 5.1L3.4 10.5" stroke="#000" stroke-width="2.1" fill="none"/></svg><i class="bar" style="left:524.2px;background:#000"></i><b class="tx" style="left:530.00px;transform:scaleX(1.091)">n</b><b class="tx" style="left:544.00px;transform:scaleX(1.091)">o</b><b class="tx" style="left:558.00px;transform:scaleX(1.091)">d</b><b class="tx" style="left:572.00px;transform:scaleX(1.112)">e</b><b class="tx" style="left:585.77px;transform:scaleX(1.350)">(</b><b class="tx" style="left:596.77px;transform:scaleX(1.350)">)</b><b class="m" style="left:607.00px;transform:scaleX(1.205)">&quot;</b><i class="sl" style="left:616px;width:9px;background:#0000ff;clip-path:polygon(6.6px 0,8.6px 0,2px 100%,0px 100%)"></i><b class="m" style="left:625.00px;transform-origin:0 7px;transform:scale(1.304,1.18)">&gt;</b></div>
<div class="ln" style="top:623.80px"><b class="m" style="left:145.00px;transform-origin:0 7px;transform:scale(1.304,1.18)">&lt;</b><i class="sl" style="left:161px;width:9px;background:#0000ff;clip-path:polygon(6.6px 0,8.6px 0,2px 100%,0px 100%)"></i><b class="t" style="left:170.00px;transform:scaleX(0.856)">P</b><b class="t" style="left:182.00px;transform:scaleX(1.286)">r</b><b class="t" style="left:191.00px;transform:scaleX(1.027)">o</b><b class="t" style="left:203.00px;transform:scaleX(1.027)">d</b><b class="t" style="left:215.00px;transform:scaleX(1.112)">u</b><b class="t" style="left:228.00px;transform:scaleX(0.952)">c</b><b class="t" style="left:238.06px;transform:scaleX(1.350)">t</b><b class="t" style="left:246.00px;transform:scaleX(0.989)">N</b><b class="t" style="left:261.00px;transform:scaleX(1.027)">a</b><b class="t" style="left:273.00px;transform:scaleX(1.086)">m</b><b class="t" style="left:292.00px;transform:scaleX(1.027)">e</b><b class="m" style="left:304.00px;transform-origin:0 7px;transform:scale(1.304,1.18)">&gt;</b></div>
<div class="ln" style="top:647.92px"><b class="m" style="left:105.00px;transform-origin:0 7px;transform:scale(1.304,1.18)">&lt;</b><i class="sl" style="left:121px;width:9px;background:#0000ff;clip-path:polygon(6.6px 0,8.6px 0,2px 100%,0px 100%)"></i><b class="t" style="left:130.00px;transform:scaleX(1.143)">x</b><b class="t" style="left:142.00px;transform:scaleX(0.952)">s</b><b class="t" style="left:152.00px;transform:scaleX(1.070)">l</b><b class="t" style="left:157.56px;transform:scaleX(1.350)">:</b><b class="t" style="left:166.06px;transform:scaleX(1.350)">t</b><b class="t" style="left:174.00px;transform:scaleX(1.027)">e</b><b class="t" style="left:186.00px;transform:scaleX(1.086)">m</b><b class="t" style="left:205.00px;transform:scaleX(1.027)">p</b><b class="t" style="left:217.00px;transform:scaleX(1.070)">l</b><b class="t" style="left:222.00px;transform:scaleX(1.027)">a</b><b class="t" style="left:234.06px;transform:scaleX(1.350)">t</b><b class="t" style="left:242.00px;transform:scaleX(1.027)">e</b><b class="m" style="left:254.00px;transform-origin:0 7px;transform:scale(1.304,1.18)">&gt;</b></div>
<div class="ln" style="top:672.04px"><b class="m" style="left:65.00px;transform-origin:0 7px;transform:scale(1.304,1.18)">&lt;</b><i class="sl" style="left:81px;width:9px;background:#0000ff;clip-path:polygon(6.6px 0,8.6px 0,2px 100%,0px 100%)"></i><b class="t" style="left:90.00px;transform:scaleX(1.143)">x</b><b class="t" style="left:102.00px;transform:scaleX(0.952)">s</b><b class="t" style="left:112.00px;transform:scaleX(1.070)">l</b><b class="t" style="left:117.56px;transform:scaleX(1.350)">:</b><b class="t" style="left:126.00px;transform:scaleX(0.952)">s</b><b class="t" style="left:136.06px;transform:scaleX(1.350)">t</b><b class="t" style="left:144.00px;transform:scaleX(1.143)">y</b><b class="t" style="left:156.00px;transform:scaleX(1.070)">l</b><b class="t" style="left:161.00px;transform:scaleX(1.027)">e</b><b class="t" style="left:173.00px;transform:scaleX(0.952)">s</b><b class="t" style="left:183.00px;transform:scaleX(1.112)">h</b><b class="t" style="left:196.00px;transform:scaleX(1.027)">e</b><b class="t" style="left:208.00px;transform:scaleX(1.027)">e</b><b class="t" style="left:220.06px;transform:scaleX(1.350)">t</b><b class="m" style="left:228.00px;transform-origin:0 7px;transform:scale(1.304,1.18)">&gt;</b></div>
</body></html>
